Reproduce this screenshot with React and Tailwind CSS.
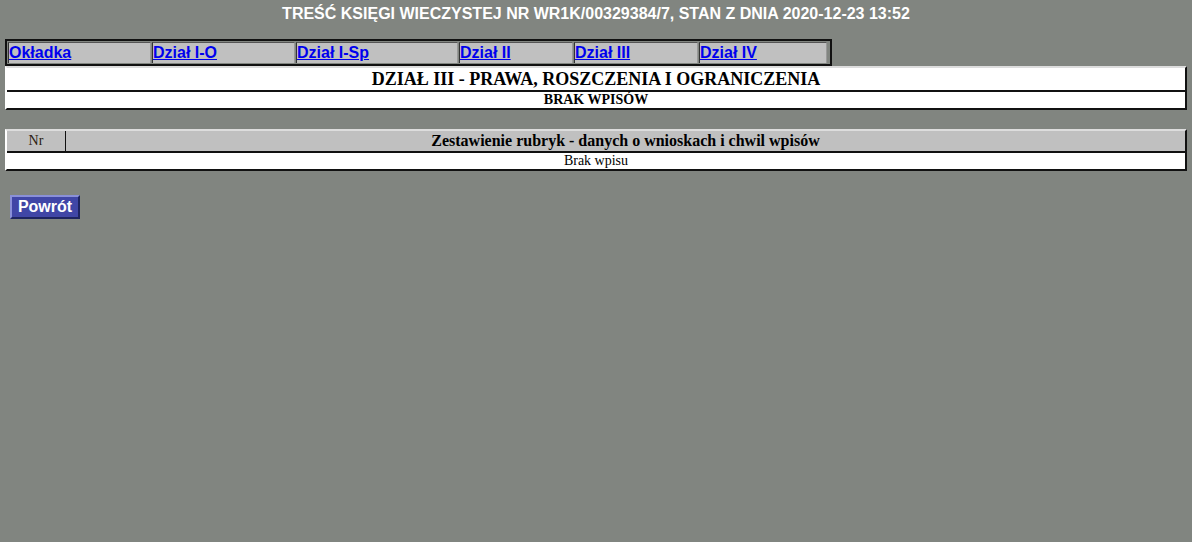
import React from 'react';

const tabs = [
  { label: 'Okładka', w: 'w-[143px]' },
  { label: 'Dział I-O', w: 'w-[143px]' },
  { label: 'Dział I-Sp', w: 'w-[162px]' },
  { label: 'Dział II', w: 'w-[114px]' },
  { label: 'Dział III', w: 'w-[124px]' },
  { label: 'Dział IV', w: 'w-[128px]' },
];

const App = () => {
  return (
    <div className="min-h-[542px] w-full bg-[#818580] font-['Liberation_Sans',Arial,sans-serif]">
      {/* Header */}
      <div className="pt-[4px] text-center text-[16px] font-bold leading-[20px] text-white">
        TREŚĆ KSIĘGI WIECZYSTEJ NR WR1K/00329384/7, STAN Z DNIA 2020-12-23 13:52
      </div>

      {/* Tabs */}
      <div className="ml-[5px] mt-[15px] flex w-[827px] gap-[1px] border-2 border-[#111] p-[1px]">
        {tabs.map(tab => (
          <div
            key={tab.label}
            className={`${tab.w} h-[21px] border-l border-r border-t border-l-[#333] border-r-[#999] border-t-[#555] bg-[#c0c0c0] text-[16px] font-bold leading-[19px]`}
          >
            <a href="#" className="text-[#0000ee] underline">{tab.label}</a>
          </div>
        ))}
      </div>

      {/* Section */}
      <div className="mx-[5px] border-2 border-b-[#111] border-l-white border-r-[#111] border-t-[#ddd] bg-white font-['Liberation_Serif','Times_New_Roman',serif] text-black">
        <div className="h-[22px] text-center text-[18px] font-bold leading-[22px]">
          DZIAŁ III - PRAWA, ROSZCZENIA I OGRANICZENIA
        </div>
        <div className="h-[18px] border-t-2 border-[#111] text-center text-[14px] font-bold leading-[16px]">
          BRAK WPISÓW
        </div>
      </div>

      {/* Summary table */}
      <div className="mx-[5px] mt-[19px] border-2 border-b-[#111] border-l-white border-r-[#111] border-t-[#ddd] bg-white font-['Liberation_Serif','Times_New_Roman',serif] text-black">
        <div className="flex h-[20px] bg-[#c0c0c0]">
          <div className="w-[59px] border-r border-[#111] text-center text-[14px] leading-[19px] text-[#2a2010]">Nr</div>
          <div className="flex-1 text-center text-[16px] font-bold leading-[19px]">
            Zestawienie rubryk - danych o wnioskach i chwil wpisów
          </div>
        </div>
        <div className="h-[18px] border-t-2 border-[#111] text-center text-[14px] leading-[16px]">
          Brak wpisu
        </div>
      </div>

      {/* Back button */}
      <div className="ml-[10px] mt-[24px]">
        <button
          type="button"
          className="h-[24px] w-[70px] border-2 border-b-[#1e2460] border-l-[#8a90d8] border-r-[#1e2460] border-t-[#8a90d8] bg-[#4046a6] text-[16px] font-bold leading-[18px] text-white"
        >
          Powrót
        </button>
      </div>
    </div>
  );
};

export default App;
